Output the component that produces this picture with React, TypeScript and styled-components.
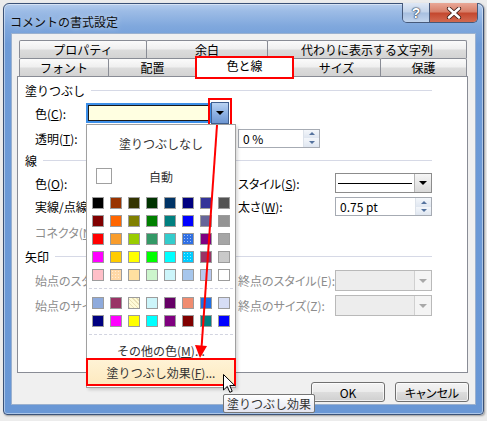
import React from "react"
import styled, { createGlobalStyle, css } from "styled-components"

const GlobalStyle = createGlobalStyle`
  html, body { margin:0; padding:0; }
  body {
    width:487px;
    height:421px;
    overflow:hidden;
    background:#ececec;
    font-family:"Noto Sans CJK JP", "Noto Sans", sans-serif;
    font-size:12px;
    color:#000;
  }
`

const Page = styled.div`
  position:relative;
  width:487px;
  height:421px;
  box-sizing:border-box;
  padding:3px 0 0 3px;
`

const Window = styled.div`
  width:481px;
  height:412px;
  box-sizing:border-box;
  border:1px solid #3b5277;
  border-radius:6px 6px 4px 4px;
  background:linear-gradient(180deg, #b6cdec 0px, #9dbce6 7px, #80a8dd 22px, #6e9bd7 40px, #6997d5 100%);
  box-shadow:inset 0 0 0 1px rgba(255,255,255,.45), 1px 1px 2px rgba(0,0,0,.35);
  display:flex;
  flex-direction:column;
  padding:0 7px 9px 7px;
`

const TitleBar = styled.div`
  height:29px;
  margin:0 -7px;
  padding:0 5px 0 6px;
  display:flex;
  align-items:flex-start;
`

const Title = styled.div`
  margin-top:10px;
  font-size:12px;
  line-height:16px;
  color:#0d0d0d;
  text-shadow:0 0 6px rgba(255,255,255,.7);
`

const CaptionButtons = styled.div`
  margin-left:auto;
  margin-top:-1px;
  display:flex;
  height:19px;
  border:1px solid #46597a;
  border-top:none;
  border-radius:0 0 5px 5px;
  overflow:hidden;
`

const HelpButton = styled.div`
  width:26px;
  display:flex;
  align-items:center;
  justify-content:center;
  background:linear-gradient(180deg, #dfe8f5 0%, #c2d3ea 48%, #a7bfe0 52%, #c3d5ee 100%);
  border-right:1px solid #46597a;
  font-family:"Liberation Sans", sans-serif;
  font-weight:bold;
  font-size:14px;
  color:#fff;
  text-shadow:0 0 1px #2a3a55, 0 0 1px #2a3a55, 0 0 2px #2a3a55;
`

const CloseButton = styled.div`
  width:47px;
  display:flex;
  align-items:center;
  justify-content:center;
  background:linear-gradient(180deg, #e9a897 0%, #d77f69 46%, #c4482f 54%, #d26a51 100%);
`

const Client = styled.div`
  flex:1;
  box-sizing:border-box;
  border:1px solid #9bb1cf;
  background:#f0f0f0;
  padding:6px 7px 0 5px;
  display:flex;
  flex-direction:column;
`

const TabStrip = styled.div`
  margin-left:2px;
  display:flex;
  flex-direction:column;
`

const TabRow = styled.div`
  display:flex;
  height:18px;
`

const Tab = styled.div<{ $w: number; $active?: boolean }>`
  position:relative;
  width:${p => p.$w}px;
  height:18px;
  box-sizing:border-box;
  border:1px solid #898c95;
  border-bottom:none;
  border-radius:2px 2px 0 0;
  background:linear-gradient(180deg, #fbfbfb 0%, #efefef 48%, #dcdcdc 52%, #d3d3d3 100%);
  display:flex;
  align-items:center;
  justify-content:center;
  line-height:16px;
  & + & { margin-left:-1px; }
  ${p => p.$active && css`
    height:21px;
    margin-top:-2px;
    background:#fff;
    z-index:2;
    padding-bottom:2px;
    &::after {
      content:"";
      position:absolute;
      top:-1px;
      left:-2px;
      right:-2px;
      bottom:-2px;
      border:2px solid #ff0000;
    }
  `}
`

const Panel = styled.div`
  height:297px;
  box-sizing:border-box;
  border:1px solid #898c95;
  background:#fff;
  padding:5px 35px 0 7px;
  display:flex;
  flex-direction:column;
`

const Section = styled.div<{ $mt: number }>`
  display:flex;
  align-items:center;
  gap:6px;
  height:16px;
  margin-top:${p => p.$mt}px;
  &::after {
    content:"";
    flex:1;
    height:1px;
    background:#d6d9e6;
  }
`

const Row = styled.div<{ $h: number; $mt: number }>`
  display:grid;
  grid-template-columns:51px 152px 97px 97px;
  align-items:center;
  padding-left:10px;
  height:${p => p.$h}px;
  margin-top:${p => p.$mt}px;
`

const Label = styled.span<{ $off?: boolean }>`
  white-space:nowrap;
  color:${p => (p.$off ? "#8d8d8d" : "#000")};
  font-feature-settings:"palt";
`

const ColorCombo = styled.div`
  position:relative;
  width:143px;
  height:22px;
  display:flex;
  align-items:center;
`

const ColorField = styled.div`
  flex:1;
  height:20px;
  box-sizing:border-box;
  border:2px solid #3d8fe8;
  box-shadow:inset 0 0 0 1px #1a1a1a;
  background:#ffffe1;
`

const DropButton = styled.div`
  position:relative;
  width:18px;
  height:22px;
  box-sizing:border-box;
  border:1px solid #3f5f8f;
  background:linear-gradient(180deg, #b9d3f3 0%, #8fb3e4 50%, #6f97d2 100%);
  display:flex;
  align-items:center;
  justify-content:center;
  &::before {
    content:"";
    border-left:4px solid transparent;
    border-right:4px solid transparent;
    border-top:4px solid #000;
  }
  &::after {
    content:"";
    position:absolute;
    top:-5px;
    left:-4px;
    right:-4px;
    bottom:-3px;
    border:2px solid #ff0000;
  }
`

const Popup = styled.div`
  position:absolute;
  top:22px;
  left:0;
  width:150px;
  box-sizing:border-box;
  border:1px solid #a0a0a0;
  background:#fff;
  padding:4px 0 2px;
  z-index:5;
  display:flex;
  flex-direction:column;
  box-shadow:2px 2px 3px rgba(0,0,0,.15);
`

const PopItem = styled.div<{ $h: number; $mt?: number }>`
  height:${p => p.$h}px;
  margin-top:${p => p.$mt ?? 0}px;
  display:flex;
  align-items:center;
  justify-content:center;
  color:#333;
  white-space:nowrap;
`

const AutoRow = styled.div`
  height:38px;
  display:grid;
  align-items:center;
  color:#333;
  & > * { grid-area:1 / 1; }
`

const AutoBox = styled.div`
  justify-self:start;
  margin-left:9px;
  width:16px;
  height:16px;
  box-sizing:border-box;
  border:1px solid #a0a0a0;
`

const AutoText = styled.span`
  justify-self:center;
`

const Swatches = styled.div<{ $mt: number }>`
  display:grid;
  grid-template-columns:repeat(8, 12px);
  grid-auto-rows:12px;
  gap:6px;
  padding-left:5px;
  margin-top:${p => p.$mt}px;
`

type Pat = "grain" | "dots" | "hatch"

const Swatch = styled.div<{ $c: string; $p?: Pat }>`
  box-sizing:border-box;
  border:1px solid #9c9c9c;
  background-color:${p => p.$c};
  ${p => p.$p === "grain" && css`
    background-image:radial-gradient(circle, rgba(255,255,255,.32) 0.5px, transparent 0.9px);
    background-size:2px 2px;
  `}
  ${p => p.$p === "dots" && css`
    background-image:radial-gradient(circle, rgba(255,255,255,.55) 0.6px, transparent 1px);
    background-size:3px 3px;
  `}
  ${p => p.$p === "hatch" && css`
    background-image:repeating-linear-gradient(45deg, rgba(160,130,60,.22) 0 1px, transparent 1px 3px);
  `}
`

const Separator = styled.div<{ $mt: number }>`
  margin:${p => p.$mt}px 2px 0;
  border-top:1px dashed #d2d4e0;
`

const EffectsItem = styled.div`
  position:relative;
  height:26px;
  display:flex;
  align-items:center;
  justify-content:center;
  color:#333;
  background:linear-gradient(180deg, #fff3d6 0%, #fde9bf 100%);
  box-shadow:inset 0 -1px 0 #f0c878;
  &::after {
    content:"";
    position:absolute;
    top:-1px;
    left:-1px;
    right:-1px;
    bottom:-1px;
    border:2px solid #ff0000;
  }
`

const SpinBox = styled.div<{ $w: number }>`
  width:${p => p.$w}px;
  height:19px;
  box-sizing:border-box;
  border:1px solid #a6abb3;
  background:#fff;
  display:flex;
  align-items:center;
`

const BoxText = styled.span`
  flex:1;
  padding-left:4px;
`

const SpinButtons = styled.div`
  width:15px;
  align-self:stretch;
  display:flex;
  flex-direction:column;
  border-left:1px solid #dce2ea;
`

const SpinHalf = styled.div<{ $down?: boolean }>`
  flex:1;
  display:flex;
  align-items:center;
  justify-content:center;
  background:linear-gradient(180deg, #f4f7fb, #dfe6f0);
  &::before {
    content:"";
    border-left:3px solid transparent;
    border-right:3px solid transparent;
    ${p => (p.$down ? "border-top:3px solid #55739e;" : "border-bottom:3px solid #55739e;")}
  }
`

const Combo = styled.div<{ $off?: boolean; $h: number }>`
  width:97px;
  height:${p => p.$h}px;
  box-sizing:border-box;
  border:1px solid ${p => (p.$off ? "#b9b9b9" : "#8c8c8c")};
  background:${p => (p.$off ? "#ededed" : "#fff")};
  display:flex;
  align-items:stretch;
`

const LineSample = styled.div`
  flex:1;
  display:flex;
  align-items:center;
  padding:0 2px;
  &::before {
    content:"";
    flex:1;
    height:1px;
    background:#000;
  }
`

const ComboButton = styled.div<{ $off?: boolean }>`
  width:16px;
  border-left:1px solid ${p => (p.$off ? "#d0d0d0" : "#b4b4b4")};
  background:${p => (p.$off ? "#f4f4f4" : "linear-gradient(180deg, #f6f6f6, #d9d9d9)")};
  display:flex;
  align-items:center;
  justify-content:center;
  &::before {
    content:"";
    border-left:4px solid transparent;
    border-right:4px solid transparent;
    border-top:4px solid ${p => (p.$off ? "#a8a8a8" : "#000")};
  }
`

const ButtonRow = styled.div`
  display:flex;
  justify-content:flex-end;
  gap:10px;
  margin:9px -1px 0 0;
`

const Button = styled.div<{ $w: number }>`
  width:${p => p.$w}px;
  height:20px;
  box-sizing:border-box;
  border:1px solid #707070;
  border-radius:3px;
  background:linear-gradient(180deg, #f3f3f3 0%, #ebebeb 48%, #dddddd 52%, #cfcfcf 100%);
  box-shadow:inset 0 0 0 1px rgba(255,255,255,.7);
  display:flex;
  align-items:center;
  justify-content:center;
  font-feature-settings:"palt";
`

const Overlay = styled.svg`
  position:absolute;
  left:0;
  top:0;
  pointer-events:none;
  z-index:20;
`

const Tooltip = styled.div`
  position:absolute;
  left:223px;
  top:394px;
  height:19px;
  box-sizing:border-box;
  padding:0 3px;
  border:1px solid #767676;
  border-radius:2px;
  background:linear-gradient(180deg, #ffffff, #e4e5f0);
  line-height:17px;
  color:#333;
  white-space:nowrap;
  z-index:21;
`

const Cursor = styled.svg`
  position:absolute;
  left:223px;
  top:374px;
  z-index:22;
`

type Sw = { c: string; p?: Pat }
const s = (c: string, p?: Pat): Sw => ({ c, p })

const standard: Sw[] = [
  s("#000000"), s("#993300"), s("#333300"), s("#003300"), s("#003366"), s("#000080"), s("#333399"), s("#333333", "grain"),
  s("#800000"), s("#ff6600"), s("#808000"), s("#008000"), s("#008080"), s("#0000ff"), s("#666699"), s("#808080", "grain"),
  s("#ff0000"), s("#f99d2c"), s("#99cc00"), s("#339966"), s("#33cccc"), s("#2f6fe4", "dots"), s("#800080"), s("#969696", "grain"),
  s("#ff00ff"), s("#ffcc00"), s("#ffff00"), s("#00ff00"), s("#00ffff"), s("#00ccff", "dots"), s("#993366"), s("#c0c0c0", "grain"),
  s("#ffbfc8"), s("#ffd8a6", "dots"), s("#ffe0a0"), s("#ccf5cc"), s("#ccf5fa"), s("#a6c6ec"), s("#b8c8f0"), s("#ffffff"),
]

const chart: Sw[] = [
  s("#8eaadc"), s("#993366"), s("#fffbd8", "hatch"), s("#ccf5fa"), s("#660066"), s("#f08c70"), s("#1c6ee6"), s("#d0d8f4", "grain"),
  s("#000080"), s("#ff00ff"), s("#ffff00"), s("#00ffff"), s("#800080"), s("#800000"), s("#008080"), s("#0000ff"),
]

const Spin = ({ w, value }: { w: number; value: string }) => (
  <SpinBox $w={w}>
    <BoxText>{value}</BoxText>
    <SpinButtons>
      <SpinHalf />
      <SpinHalf $down />
    </SpinButtons>
  </SpinBox>
)

export default function App() {
  return (
    <Page>
      <GlobalStyle />
      <Window>
        <TitleBar>
          <Title>コメントの書式設定</Title>
          <CaptionButtons>
            <HelpButton>?</HelpButton>
            <CloseButton>
              <svg width="16" height="12" viewBox="0 0 16 12">
                <path d="M3 1.5 L13 10.5 M13 1.5 L3 10.5" stroke="#3a1a14" strokeWidth="4.2" strokeLinecap="round" />
                <path d="M3 1.5 L13 10.5 M13 1.5 L3 10.5" stroke="#ffffff" strokeWidth="2.6" strokeLinecap="round" />
              </svg>
            </CloseButton>
          </CaptionButtons>
        </TitleBar>

        <Client>
          <TabStrip>
            <TabRow>
              <Tab $w={128}>プロパティ</Tab>
              <Tab $w={122}>余白</Tab>
              <Tab $w={200}>代わりに表示する文字列</Tab>
            </TabRow>
            <TabRow>
              <Tab $w={90}>フォント</Tab>
              <Tab $w={89}>配置</Tab>
              <Tab $w={97} $active>色と線</Tab>
              <Tab $w={89}>サイズ</Tab>
              <Tab $w={87}>保護</Tab>
            </TabRow>
          </TabStrip>

          <Panel>
            <Section $mt={0}>塗りつぶし</Section>
            <Row $h={22} $mt={4}>
              <Label>色(<u>C</u>):</Label>
              <ColorCombo>
                <ColorField />
                <DropButton />
                <Popup>
                  <PopItem $h={28}>塗りつぶしなし</PopItem>
                  <AutoRow>
                    <AutoBox />
                    <AutoText>自動</AutoText>
                  </AutoRow>
                  <Swatches $mt={2}>
                    {standard.map((w, i) => (
                      <Swatch key={i} $c={w.c} $p={w.p} />
                    ))}
                  </Swatches>
                  <Separator $mt={7} />
                  <Swatches $mt={8}>
                    {chart.map((w, i) => (
                      <Swatch key={i} $c={w.c} $p={w.p} />
                    ))}
                  </Swatches>
                  <Separator $mt={7} />
                  <PopItem $h={18} $mt={6}>その他の色(<u>M</u>)...</PopItem>
                  <EffectsItem>塗りつぶし効果(<u>F</u>)...</EffectsItem>
                </Popup>
              </ColorCombo>
            </Row>
            <Row $h={20} $mt={4}>
              <Label>透明(<u>T</u>):</Label>
              <span />
              <Spin w={82} value="0 %" />
            </Row>

            <Section $mt={4}>線</Section>
            <Row $h={20} $mt={5}>
              <Label>色(<u>O</u>):</Label>
              <span />
              <Label>スタイル(<u>S</u>):</Label>
              <Combo $h={20}>
                <LineSample />
                <ComboButton />
              </Combo>
            </Row>
            <Row $h={19} $mt={4}>
              <Label>実線/点線(<u>D</u>):</Label>
              <span />
              <Label>太さ(<u>W</u>):</Label>
              <Spin w={97} value="0.75 pt" />
            </Row>
            <Row $h={22} $mt={5}>
              <Label $off>コネクタ(<u>N</u>)</Label>
            </Row>

            <Section $mt={5}>矢印</Section>
            <Row $h={21} $mt={6}>
              <Label $off>始点のスタイル(B):</Label>
              <span />
              <Label $off>終点のスタイル(E):</Label>
              <Combo $off $h={21}>
                <BoxText />
                <ComboButton $off />
              </Combo>
            </Row>
            <Row $h={21} $mt={4}>
              <Label $off>始点のサイズ(I):</Label>
              <span />
              <Label $off>終点のサイズ(Z):</Label>
              <Combo $off $h={21}>
                <BoxText />
                <ComboButton $off />
              </Combo>
            </Row>
          </Panel>

          <ButtonRow>
            <Button $w={74}>OK</Button>
            <Button $w={74}>キャンセル</Button>
          </ButtonRow>
        </Client>
      </Window>

      <Overlay width="487" height="421" viewBox="0 0 487 421">
        <line x1="217" y1="125" x2="201.5" y2="348" stroke="#ff0000" strokeWidth="2" />
        <polygon points="200,358 195,345 207,346" fill="#ff0000" />
      </Overlay>

      <Tooltip>塗りつぶし効果</Tooltip>

      <Cursor width="13" height="20" viewBox="0 0 13 20">
        <path d="M0.5 0.5 L0.5 16 L4.3 12.4 L6.8 18.3 L9.2 17.3 L6.8 11.6 L11.8 11.6 Z" fill="#fff" stroke="#000" strokeWidth="1" strokeLinejoin="round" />
      </Cursor>
    </Page>
  )
}
